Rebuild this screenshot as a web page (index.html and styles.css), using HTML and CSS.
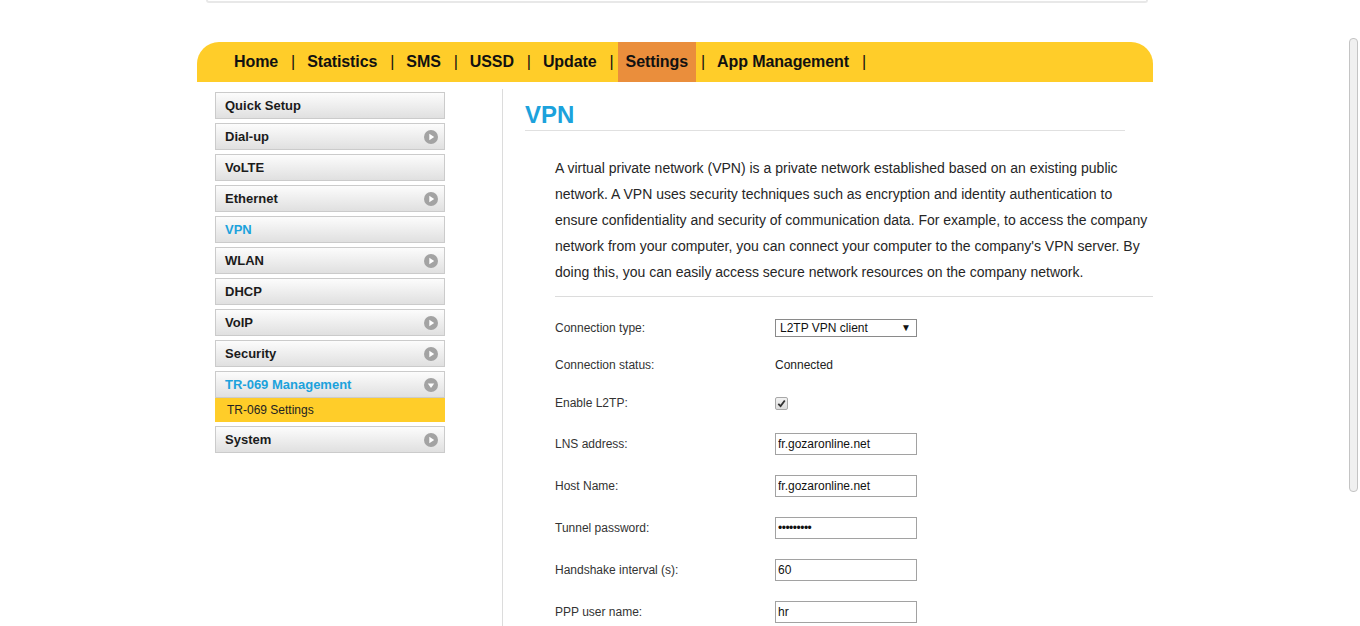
FILE: index.html
```html
<!DOCTYPE html>
<html lang="en">
<head>
    <meta charset="UTF-8">
    <title>VPN</title>
    <link rel="stylesheet" href="styles.css">
</head>
<body>
    <div class="topbar"></div>
    <div class="page">
        <div class="nav">
            <a>Home</a><span class="sep">|</span>
            <a>Statistics</a><span class="sep">|</span>
            <a>SMS</a><span class="sep">|</span>
            <a>USSD</a><span class="sep">|</span>
            <a>Update</a><span class="sep">|</span>
            <a class="active">Settings</a><span class="sep">|</span>
            <a>App Management</a><span class="sep">|</span>
        </div>
        <div class="main">
            <div class="side">
                <div class="item">Quick Setup</div>
                <div class="item">Dial-up
                    <svg class="arrow" viewBox="0 0 14 14"><circle cx="7" cy="7" r="7"/><polygon points="5.3,3.8 10.2,7 5.3,10.2"/></svg>
                </div>
                <div class="item">VoLTE</div>
                <div class="item">Ethernet
                    <svg class="arrow" viewBox="0 0 14 14"><circle cx="7" cy="7" r="7"/><polygon points="5.3,3.8 10.2,7 5.3,10.2"/></svg>
                </div>
                <div class="item current">VPN</div>
                <div class="item">WLAN
                    <svg class="arrow" viewBox="0 0 14 14"><circle cx="7" cy="7" r="7"/><polygon points="5.3,3.8 10.2,7 5.3,10.2"/></svg>
                </div>
                <div class="item">DHCP</div>
                <div class="item">VoIP
                    <svg class="arrow" viewBox="0 0 14 14"><circle cx="7" cy="7" r="7"/><polygon points="5.3,3.8 10.2,7 5.3,10.2"/></svg>
                </div>
                <div class="item">Security
                    <svg class="arrow" viewBox="0 0 14 14"><circle cx="7" cy="7" r="7"/><polygon points="5.3,3.8 10.2,7 5.3,10.2"/></svg>
                </div>
                <div class="item current open">TR-069 Management
                    <svg class="arrow" viewBox="0 0 14 14"><circle cx="7" cy="7" r="7"/><polygon points="3.8,5.4 10.2,5.4 7,9.9"/></svg>
                </div>
                <div class="subitem">TR-069 Settings</div>
                <div class="item">System
                    <svg class="arrow" viewBox="0 0 14 14"><circle cx="7" cy="7" r="7"/><polygon points="5.3,3.8 10.2,7 5.3,10.2"/></svg>
                </div>
            </div>
            <div class="content">
                <h2>VPN</h2>
                <p class="intro">A virtual private network (VPN) is a private network established based on an existing public<br>
                network. A VPN uses security techniques such as encryption and identity authentication to<br>
                ensure confidentiality and security of communication data. For example, to access the company<br>
                network from your computer, you can connect your computer to the company's VPN server. By<br>
                doing this, you can easily access secure network resources on the company network.</p>
                <div class="form">
                    <div class="row r37">
                        <label>Connection type:</label>
                        <div class="select">L2TP VPN client</div>
                    </div>
                    <div class="row r37">
                        <label>Connection status:</label>
                        <span class="value">Connected</span>
                    </div>
                    <div class="row r40">
                        <label>Enable L2TP:</label>
                        <span class="check">
                            <svg viewBox="0 0 12 12"><polyline points="2.5,6.3 5,8.8 9.6,2.8"/></svg>
                        </span>
                    </div>
                    <div class="row">
                        <label>LNS address:</label>
                        <input type="text" value="fr.gozaronline.net">
                    </div>
                    <div class="row">
                        <label>Host Name:</label>
                        <input type="text" value="fr.gozaronline.net">
                    </div>
                    <div class="row">
                        <label>Tunnel password:</label>
                        <input class="pass" type="password" value="123456789">
                    </div>
                    <div class="row">
                        <label>Handshake interval (s):</label>
                        <input type="text" value="60">
                    </div>
                    <div class="row">
                        <label>PPP user name:</label>
                        <input type="text" value="hr">
                    </div>
                </div>
            </div>
        </div>
    </div>
    <div class="scrollbar"><div class="thumb"></div></div>
</body>
</html>
```

FILE: styles.css
```css
html, body {
    margin: 0;
    height: 626px;
    overflow: hidden;
}
body {
    font-family: 'Liberation Sans', Arial, sans-serif;
    background: #fff;
    color: #222;
}
.topbar {
    margin-left: 206px;
    width: 938px;
    height: 1px;
    border: 2px solid #e8e8e8;
    border-top: none;
    border-radius: 0 0 8px 8px;
}
.page {
    margin-left: 197px;
    width: 956px;
    padding-top: 39px;
}
.nav {
    display: flex;
    align-items: center;
    height: 40px;
    padding-left: 29px;
    background: #ffcd29;
    border-radius: 22px 22px 0 0;
    font-size: 16px;
    font-weight: bold;
    letter-spacing: -0.1px;
    color: #111;
}
.nav a {
    display: block;
    height: 40px;
    line-height: 40px;
    padding: 0 8px;
}
.nav a.active {
    background: #ea8e3c;
}
.nav .sep {
    margin: 0 4px 0 5px;
    font-weight: normal;
    color: #111;
}
.main {
    display: flex;
    margin-top: 7px;
}
.side {
    width: 230px;
    margin-left: 18px;
    margin-right: 57px;
    padding-top: 3px;
}
.item {
    position: relative;
    height: 25px;
    line-height: 25px;
    padding-left: 9px;
    margin-bottom: 4px;
    border: 1px solid #cbcbcb;
    background: linear-gradient(#fcfcfc, #e0e0e0);
    font-size: 13px;
    font-weight: bold;
    color: #1b1b1b;
}
.item.current {
    color: #1ca2dc;
}
.item.open {
    margin-bottom: 0;
}
.arrow {
    position: absolute;
    right: 6px;
    top: 6px;
    width: 14px;
    height: 14px;
}
.arrow circle {
    fill: #a3a3a3;
}
.arrow polygon {
    fill: #fff;
}
.subitem {
    height: 24px;
    line-height: 24px;
    padding-left: 12px;
    margin-bottom: 4px;
    background: #ffcd29;
    font-size: 12px;
    color: #222;
}
.content {
    flex: 1;
    border-left: 1px solid #dcdcdc;
    padding-left: 22px;
    min-height: 560px;
}
.content h2 {
    width: 600px;
    margin: 12px 0 0;
    padding-bottom: 1px;
    line-height: 28px;
    font-size: 24px;
    color: #1ca2dc;
    border-bottom: 1px solid #e0e0e0;
}
.intro {
    margin: 24px 0 0 30px;
    padding-bottom: 11px;
    width: 598px;
    line-height: 26px;
    font-size: 14px;
    color: #262626;
    white-space: nowrap;
    border-bottom: 1px solid #dcdcdc;
}
.form {
    margin: 12px 0 0 30px;
    font-size: 12px;
    color: #333;
}
.row {
    display: flex;
    align-items: center;
    height: 42px;
}
.row.r37 {
    height: 37px;
}
.row.r40 {
    height: 40px;
}
.row label {
    width: 220px;
}
.select {
    position: relative;
    box-sizing: border-box;
    width: 142px;
    height: 18px;
    line-height: 16px;
    padding-left: 4px;
    border: 1px solid #8a8a8a;
    background: #fff;
    color: #111;
}
.select::after {
    content: "\25BC";
    position: absolute;
    right: 5px;
    top: 0;
    font-size: 10px;
    color: #111;
}
.value {
    color: #222;
}
.check {
    display: block;
    box-sizing: border-box;
    width: 13px;
    height: 13px;
    border: 1px solid #a8a8a8;
    border-radius: 2px;
    background: linear-gradient(#f2f2f2, #dcdcdc);
}
.check svg {
    display: block;
    width: 11px;
    height: 11px;
}
.check polyline {
    fill: none;
    stroke: #333;
    stroke-width: 2;
}
.row input {
    box-sizing: border-box;
    width: 142px;
    height: 22px;
    margin: 0;
    padding: 0 2px;
    border: 1px solid #a2a2a2;
    font-family: 'Liberation Sans', Arial, sans-serif;
    font-size: 12px;
    color: #111;
    outline: none;
}
.row input.pass {
    letter-spacing: -0.5px;
}
.scrollbar {
    position: fixed;
    top: 0;
    right: 0;
    width: 17px;
    height: 626px;
    background: #fff;
}
.thumb {
    position: absolute;
    left: 6px;
    top: 38px;
    width: 7px;
    height: 452px;
    border: 1px solid #c4c4c4;
    border-radius: 4px;
    background: #f0f0f0;
}
```
